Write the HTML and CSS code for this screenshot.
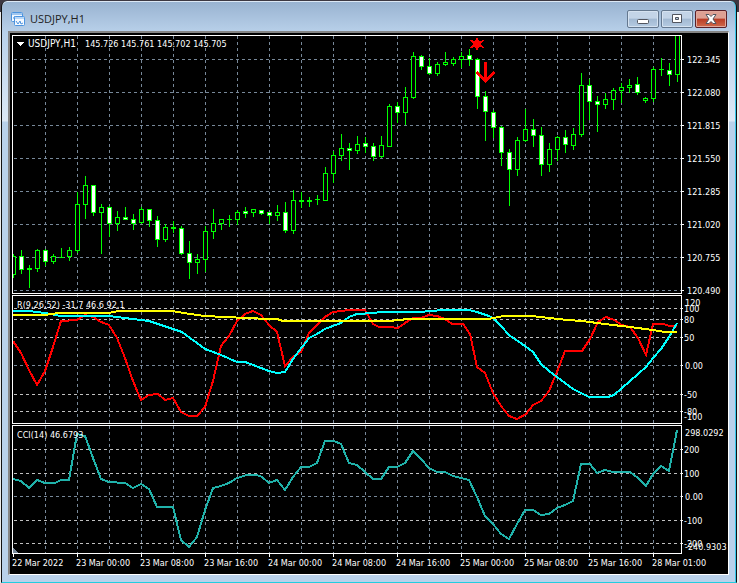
FILE: index.html
```html
<!DOCTYPE html>
<html lang="en">
<head>
    <meta charset="UTF-8">
    <meta name="viewport" content="width=device-width, initial-scale=1.0">
    <title>USDJPY,H1</title>
    <link rel="stylesheet" href="styles.css">
</head>
<body>
    <div class="window">
        <header class="titlebar">
            <svg class="app-icon" viewBox="0 0 14 14" aria-hidden="true">
                <rect x="0.5" y="0.5" width="11" height="9" rx="1" fill="#f4f9ff" stroke="#4d94df"/>
                <path d="M1 2h10" stroke="#4d94df"/>
                <path d="M2 6h1l1-2 1 2 1-1" fill="none" stroke="#4d94df"/>
                <rect x="3.5" y="4.5" width="10" height="9" rx="1" fill="#f4f9ff" stroke="#4d94df"/>
                <path d="M4 6h9" stroke="#7db4ee"/>
                <path d="M5 9l2 3 2-3 1 3 2-1" fill="none" stroke="#4d94df"/>
            </svg>
            <h1 class="title">USDJPY,H1</h1>
            <button class="win-btn" aria-label="Minimize">
                <svg viewBox="0 0 12 10"><rect x="0.5" y="5.5" width="11" height="4" rx="1" fill="#fff" stroke="#51555f"/></svg>
            </button>
            <button class="win-btn" aria-label="Restore">
                <svg viewBox="0 0 12 10"><path d="M1.500.500h9v8h-9zM4.500 3.500h3v2h-3z" fill="#fff" fill-rule="evenodd" stroke="#51555f"/></svg>
            </button>
            <button class="win-btn close" aria-label="Close">
                <svg viewBox="0 0 12 10"><path d="M1 .5h3l2 2 2-2h3L8 5l3 4.500H8l-2-2-2 2H1L4 5z" fill="#fff" stroke="#51555f"/></svg>
            </button>
        </header>
        <main class="frame">
            <svg class="chart" id="chart" viewBox="10 33 718 541"></svg>
        </main>
    </div>

    <script src="script.js"></script>
</body>
</html>
```

FILE: styles.css
```css
body{
    margin: 0;
    background: linear-gradient(#3d3842 12px, #ececec 12px);
    font-family: "Open Sans", "Noto Sans", sans-serif;
}
.window{
    box-sizing: border-box;
    margin: 1px 2px 0 1px;
    padding: 0 7px 7px 6px;
    border: 1px solid #111;
    border-top: 0;
    border-bottom-color: #22cde0;
    border-radius: 6px 6px 0 0;
    background: linear-gradient(#98b2d0, #b9d1ea 32px, #dce8f5 120px, #b9d1ea 121px);
    box-shadow: inset -1px 0 #36c8ea, inset 0 1px #dce8f5;
}
.titlebar{
    display: flex;
    align-items: center;
    gap: 2px;
    box-sizing: border-box;
    height: 30px;
    padding: 9px 2px 3px 3px;
}
.app-icon{
    width: 14px;
    height: 14px;
}
.title{
    flex: 1;
    margin: 0 0 0 3px;
    font-size: 11px;
    line-height: 18px;
    font-weight: 400;
    color: #222;
}
.win-btn{
    display: flex;
    align-items: center;
    justify-content: center;
    box-sizing: border-box;
    width: 32px;
    height: 18px;
    padding: 0;
    border: 1px solid #64788f;
    border-radius: 2px;
    background: linear-gradient(#c3d4e7 45%, #a2b9d2 50%, #b5cbe2);
    box-shadow: inset 0 0 0 1px #d5e2f0;
}
.win-btn svg{
    width: 12px;
    height: 10px;
}
.close{
    border-color: #5a2028;
    background: linear-gradient(#dda093 45%, #b93c25 50%, #cf6a4c);
    box-shadow: inset 0 0 0 1px #e0a89c;
}
.frame{
    border: 2px solid #858585;
    border-right: 1px solid #fff;
    border-bottom: 1px solid #fff;
    background-color: #000;
}
.chart{
    display: block;
    width: 100%;
    background-color: #000;
    shape-rendering: crispEdges;
}
.chart text{
    font-family: "DejaVu Sans Condensed", "DejaVu Sans", sans-serif;
    font-size: 9px;
    fill: #fff;
}
.chart .symbol{
    font-size: 10px;
}
.grid{
    stroke: #778899;
    stroke-dasharray: 3 3;
}
.level{
    stroke: #c0c0c0;
    stroke-dasharray: 3 3;
}
.pane, .tick{
    fill: none;
    stroke: #fff;
}
.up, .down, .wick{
    stroke: #00ff00;
}
.up{
    fill: #000;
}
.down{
    fill: #fff;
}
.line{
    fill: none;
    stroke-width: 2;
}
.red{
    stroke: #ff0000;
}
.aqua{
    stroke: #00ffff;
}
.yellow{
    stroke: #ffff00;
}
.teal{
    stroke: #20b2aa;
}
.signal{
    fill: #ff0000;
}
.arrow{
    fill: none;
    stroke: #ff0000;
    stroke-width: 3;
}
.handle{
    fill: #778899;
}
.marker{
    fill: #fff;
}
```

FILE: script.js
```js
const chart = document.getElementById('chart')
const LEFT = 12, RIGHT = 681, STEP = 8

// [top, bottom] of the three panes
const panes = [[35, 293], [295, 423], [425, 553]]

// [high, low, body top, body bottom, 1 = bearish]
const candles = [
    [254,277,256,274,0],[250,273,256,269,1],[265,287,268,269,0],[249,271,250,268,0],
    [249,265,250,261,1],[254,263,256,261,0],[248,257,257,257,0],[247,260,250,256,0],
    [192,252,204,250,0],[176,218,185,204,0],[185,215,185,212,1],[204,253,207,212,0],
    [206,236,207,223,1],[211,230,217,223,0],[207,219,217,219,1],[214,229,219,223,1],
    [207,223,209,222,0],[209,226,209,220,1],[216,246,220,239,1],[224,241,227,239,0],
    [221,232,227,228,0],[226,254,228,253,1],[241,278,253,262,1],[254,273,259,262,0],
    [226,271,231,259,0],[209,238,223,231,0],[219,229,219,223,0],[215,226,219,219,0],
    [210,224,212,219,0],[207,217,211,213,1],[209,216,209,212,0],[210,214,210,213,1],
    [212,223,212,215,1],[205,220,212,215,0],[202,232,212,230,1],[190,233,200,230,0],
    [192,207,200,201,0],[197,206,200,201,0],[195,204,199,199,0],[167,200,173,200,0],
    [151,182,155,173,0],[134,160,148,155,0],[143,169,148,150,1],[136,153,144,150,0],
    [137,152,143,146,1],[143,160,146,156,1],[136,157,145,156,0],[104,146,106,146,0],
    [102,122,106,112,1],[87,124,97,112,0],[52,98,56,97,0],[55,69,56,66,1],
    [58,74,66,73,1],[62,75,64,73,0],[52,65,62,64,0],[57,65,59,63,0],
    [52,67,56,59,0],[49,65,55,59,1],[58,108,59,96,1],[91,140,96,111,1],
    [110,137,112,127,1],[126,165,127,152,1],[149,205,152,169,1],[137,175,140,169,0],
    [109,141,129,140,0],[119,146,129,135,1],[127,175,135,164,1],[143,171,149,164,0],
    [136,160,137,149,0],[130,152,137,144,1],[128,149,134,145,0],[73,136,85,134,0],
    [79,119,85,101,1],[96,131,101,104,1],[93,108,99,104,0],[88,109,90,99,0],
    [83,102,87,90,0],[79,92,85,87,0],[77,94,84,92,1],[97,102,98,100,0],
    [67,101,69,98,0],[58,75,69,69,0],[63,85,70,74,1],[36,81,35,74,0]
]

const red = '13,341 21,353 29,370 37,385 45,371 53,347 61,321 77,320 85,315 93,317 101,322 109,325 117,338 125,358 133,381 141,400 149,395 158,394 165,400 173,398 181,412 189,416 197,416 205,407 213,381 221,346 229,336 237,321 245,314 253,311 261,315 269,325 277,332 285,366 293,357 301,352 309,333 317,325 325,317 333,312 341,311 349,310 365,310 373,324 379,327 389,327 398,328 405,323 413,318 421,318 429,315 437,316 445,319 452,324 463,324 470,334 477,367 485,373 493,393 501,406 509,416 517,419 526,414 533,405 541,401 549,391 557,372 565,351 582,351 590,339 598,322 606,317 614,320 622,325 630,327 638,338 646,355 653,324 664,324 669,326 677,326'
const aqua = '13,311 29,311 45,313 61,316 109,316 125,318 149,321 173,329 182,332 205,349 221,355 237,362 245,362 253,365 269,371 277,373 285,372 293,359 309,338 317,334 325,329 341,323 349,317 357,314 373,313 381,312 421,312 429,311 445,310 469,310 477,312 489,316 493,318 501,326 509,335 525,346 533,352 541,364 549,371 557,377 565,383 573,389 581,393 589,397 608,397 614,395 622,388 630,381 638,374 646,367 653,358 661,349 669,337 677,323'
const yellow = '13,315 45,315 58,313 109,313 118,311 172,311 190,314 205,316 225,317 247,318 268,319 277,319 283,321 389,321 400,320 407,319 489,319 503,316 531,316 550,318 567,320 582,321 605,324 630,327 653,330 665,332 677,332'
const teal = '13,479 21,481 29,488 37,480 45,483 55,483 61,480 69,480 77,434 85,436 93,458 101,479 109,482 125,483 133,488 141,484 149,489 157,507 173,507 181,540 189,547 197,537 205,510 213,488 221,486 229,483 237,478 247,475 257,475 262,477 269,483 277,480 285,490 293,477 301,467 309,467 317,463 325,441 334,441 341,444 349,463 357,465 365,472 373,479 381,479 389,467 397,467 405,463 413,451 421,459 429,468 437,472 445,472 453,476 469,480 477,497 485,516 493,524 501,534 509,539 517,524 525,510 533,510 541,515 549,514 557,508 565,505 573,501 581,464 590,464 597,473 605,470 613,472 630,472 638,478 646,486 653,474 661,466 669,471 677,430'

const prices = ['122.345', '122.080', '121.815', '121.550', '121.285', '121.020', '120.755', '120.490']
const dates = ['22 Mar 2022', '23 Mar 00:00', '23 Mar 08:00', '23 Mar 16:00', '24 Mar 00:00', '24 Mar 08:00',
    '24 Mar 16:00', '25 Mar 00:00', '25 Mar 08:00', '25 Mar 16:00', '28 Mar 01:00']

// [label, y, line class]
const levels = [
    ['120', 302, ''], ['100', 308, 'level'], ['80', 319, 'level'], ['50', 337, 'level'],
    ['0.00', 365, 'grid'], ['-50', 394, 'level'], ['-80', 411, 'level'], ['-100', 416, ''],
    ['298.0292', 432, ''], ['200', 449, 'level'], ['100', 473, 'level'], ['0.00', 496, 'grid'],
    ['-100', 520, 'level'], ['-200', 543, 'level'], ['-240.9303', 546, '']
]

let out = ''

function line(x1, y1, x2, y2, cls){
    out += `<path class="${cls}" d="M${x1} ${y1}L${x2} ${y2}"/>`
}
function text(x, y, value, cls = 'label'){
    out += `<text class="${cls}" x="${x}" y="${y}">${value}</text>`
}

// grid
for(let x = 45.5; x < RIGHT; x += 32){
    line(x, 36, x, 553, 'grid')
}
prices.forEach((price, i) => {
    let y = 59 + i * 33
    line(LEFT + 2, y + 0.5, RIGHT, y + 0.5, 'grid')
    line(RIGHT + 1, y + 0.5, RIGHT + 3, y + 0.5, 'tick')
    text(687, y + 4, price)
})
levels.forEach(([label, y, cls]) => {
    if(cls){
        line(LEFT + 2, y + 0.5, RIGHT, y + 0.5, cls)
        line(RIGHT + 1, y + 0.5, RIGHT + 2, y + 0.5, 'tick')
    }
    text(label.includes('.') || label == '120' ? 685 : 684, y + 4, label)
})

// candles
candles.forEach(([high, low, top, bottom, bear], i) => {
    let x = 13.5 + i * STEP
    line(x, high, x, low + 1, 'wick')
    if(bottom - top < 2){
        for(let y = top; y <= bottom; y++){
            line(x - 2.5, y + 0.5, x + 2.5, y + 0.5, 'wick')
        }
    }else{
        out += `<rect class="${bear ? 'down' : 'up'}" x="${x - 2}" y="${top + 0.5}" width="4" height="${bottom - top}"/>`
    }
})

// signals
out += '<path class="signal" d="M477 37l2 4 5-1-3 4 3 4-5-1-2 4-2-4-5 1 3-4-3-4 5 1z"/>'
out += '<path class="arrow" d="M485.500 62v18M476.500 72l9 9 9-9"/>'

// indicators
out += `<polyline class="line red" points="${red}"/>`
out += `<polyline class="line aqua" points="${aqua}"/>`
out += `<polyline class="line yellow" points="${yellow}"/>`
out += `<polyline class="line teal" points="${teal}"/>`

// everything left of the first pane edge is hidden
out += '<rect x="10" y="33" width="2" height="541"/>'
panes.forEach(([top, bottom]) => {
    out += `<rect class="pane" x="${LEFT + 0.5}" y="${top + 0.5}" width="${RIGHT - LEFT}" height="${bottom - top}"/>`
})
out += '<path class="handle" d="M13 548l5 5h-5z"/>'

// captions
out += '<path class="marker" d="M16 42h8l-4 4z"/>'
text(28, 47, 'USDJPY,H1', 'symbol')
text(85, 47, '145.726 145.761 145.702 145.705')
text(17, 308, 'R(9,26,52) -31.7 46.6 92.1')
text(17, 438, 'CCI(14) 46.6793')
dates.forEach((date, i) => {
    let x = 13.5 + i * 64
    line(x, 554, x, 557, 'tick')
    text(x - 1.5, 566, date)
})

chart.innerHTML = out
```
